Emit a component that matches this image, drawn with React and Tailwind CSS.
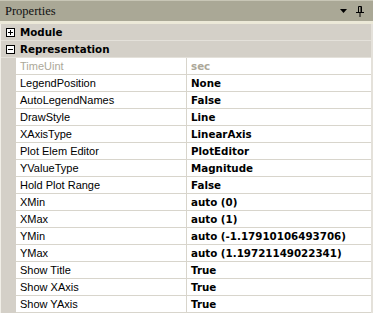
import React from "react";

const rows = [
  { name: "TimeUint", value: "sec", disabled: true },
  { name: "LegendPosition", value: "None" },
  { name: "AutoLegendNames", value: "False" },
  { name: "DrawStyle", value: "Line" },
  { name: "XAxisType", value: "LinearAxis" },
  { name: "Plot Elem Editor", value: "PlotEditor" },
  { name: "YValueType", value: "Magnitude" },
  { name: "Hold Plot Range", value: "False" },
  { name: "XMin", value: "auto (0)" },
  { name: "XMax", value: "auto (1)" },
  { name: "YMin", value: "auto (-1.17910106493706)" },
  { name: "YMax", value: "auto (1.19721149022341)" },
  { name: "Show Title", value: "True" },
  { name: "Show XAxis", value: "True" },
  { name: "Show YAxis", value: "True" },
];

const ExpandBox = ({ open }) => (
  <svg width="9" height="9" viewBox="0 0 9 9" className="shrink-0">
    <rect x="0.5" y="0.5" width="8" height="8" fill="#fff" stroke="#000" />
    <path d="M2 4.5h5" stroke="#000" />
    {!open && <path d="M4.5 2v5" stroke="#000" />}
  </svg>
);

const Category = ({ label, open }) => (
  <div className="flex items-center h-[17px] bg-[#d4d0c8] border-b border-[#e4e1da] pl-[5px]">
    <ExpandBox open={open} />
    <span className="ml-[5px] text-[10.3px] font-bold text-black font-['DejaVu_Sans',sans-serif] leading-none">
      {label}
    </span>
  </div>
);

const App = () => {
  return (
    <div className="w-[373px] h-[313px] overflow-hidden bg-[#d4d0c8] flex flex-col">
      {/* title bar */}
      <div className="h-[21px] shrink-0 flex items-center justify-between bg-[#aaa896] border-t border-[#c8c6b6] pl-[5px] pr-[9px]">
        <span className="text-[12.5px] text-[#111] font-['Liberation_Serif',serif] leading-none">
          Properties
        </span>
        <div className="flex items-center gap-[9px]">
          <svg width="7" height="4" viewBox="0 0 7 4">
            <path d="M0 0h7L3.5 4z" fill="#000" />
          </svg>
          <svg width="8" height="11" viewBox="0 0 8 11">
            <path d="M0 6.5h8" stroke="#000" />
            <path d="M2.5 0.5h3v6" stroke="#000" fill="none" />
            <path d="M2.5 0.5v6" stroke="#000" />
            <path d="M5 1v5.5" stroke="#000" />
            <path d="M4 7v4" stroke="#000" />
          </svg>
        </div>
      </div>
      <div className="h-[3px] shrink-0 bg-[#ece9d8]" />

      <div className="flex-1 flex flex-col border-l border-[#f1efe8] border-r-2 border-r-[#e4e1da]">
        <Category label="Module" />
        <Category label="Representation" open />
        {rows.map((r) => (
          <div key={r.name} className="flex h-[17px] shrink-0">
            <div className="w-[15px] shrink-0 bg-[#d4d0c8]" />
            <div className="flex flex-1 bg-white border-b border-[#d8d5cc]">
              <div
                className={`w-[171px] shrink-0 pl-[4px] flex items-center border-r border-[#d8d5cc] text-[11px] font-['Liberation_Sans',sans-serif] leading-none ${
                  r.disabled ? "text-[#aca899]" : "text-black"
                }`}
              >
                {r.name}
              </div>
              <div
                className={`flex-1 pl-[4px] flex items-center text-[10.3px] font-bold font-['DejaVu_Sans',sans-serif] leading-none ${
                  r.disabled ? "text-[#aca899]" : "text-black"
                }`}
              >
                {r.value}
              </div>
            </div>
          </div>
        ))}
      </div>
    </div>
  );
};

export default App;
